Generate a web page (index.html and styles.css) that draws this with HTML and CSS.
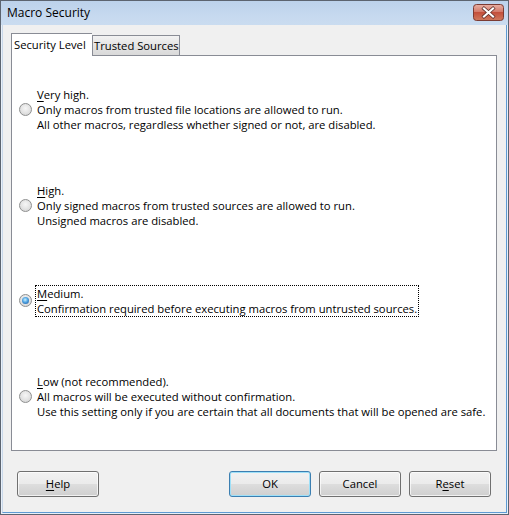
FILE: index.html
```html
<!DOCTYPE html>
<html>
<head>
<meta charset="utf-8">
<link rel="stylesheet" href="styles.css">
</head>
<body>
<div class="window">
  <div class="titlebar">
    <span class="title">Macro Security</span>
    <div class="close">
      <svg width="31" height="17" viewBox="0 0 31 17">
        <defs>
          <linearGradient id="cg" x1="0" y1="0" x2="0" y2="1">
            <stop offset="0" stop-color="#e9b1a5"/>
            <stop offset="0.45" stop-color="#d47b6b"/>
            <stop offset="0.5" stop-color="#c4503c"/>
            <stop offset="1" stop-color="#cf7a5e"/>
          </linearGradient>
        </defs>
        <rect x="0.5" y="0.5" width="30" height="16" rx="3" fill="url(#cg)" stroke="#7b3b33"/>
        <path d="M11 4.5 L20 12.5 M20 4.5 L11 12.5" stroke="#5a2a24" stroke-width="3.6" stroke-linecap="square"/>
        <path d="M11 4.5 L20 12.5 M20 4.5 L11 12.5" stroke="#ffffff" stroke-width="2.2" stroke-linecap="square"/>
      </svg>
    </div>
  </div>
  <div class="client">
    <div class="tabs">
      <div class="tab active">Security Level</div>
      <div class="tab">Trusted Sources</div>
    </div>
    <div class="panel">
      <div class="option">
        <span class="radio"></span>
        <span class="label"><u>V</u>ery high.<br>Only macros from trusted file locations are allowed to run.<br>All other macros, regardless whether signed or not, are disabled.</span>
      </div>
      <div class="option">
        <span class="radio"></span>
        <span class="label"><u>H</u>igh.<br>Only signed macros from trusted sources are allowed to run.<br>Unsigned macros are disabled.</span>
      </div>
      <div class="option">
        <span class="radio checked"></span>
        <span class="label focus"><u>M</u>edium.<br>Confirmation required before executing macros from untrusted sources.</span>
      </div>
      <div class="option">
        <span class="radio"></span>
        <span class="label"><u>L</u>ow (not recommended).<br>All macros will be executed without confirmation.<br>Use this setting only if you are certain that all documents that will be opened are safe.</span>
      </div>
    </div>
    <div class="buttons">
      <div class="btn"><u>H</u>elp</div>
      <div class="spacer"></div>
      <div class="btn default">OK</div>
      <div class="btn">Cancel</div>
      <div class="btn">R<u>e</u>set</div>
    </div>
  </div>
</div>
</body>
</html>
```

FILE: styles.css
```css
html, body {
  margin: 0;
  padding: 0;
  background: #ffffff;
}
body {
  font-family: "Open Sans", "Noto Sans", sans-serif;
  font-size: 11.25px;
  color: #000;
}
u {
  text-decoration: underline;
  text-underline-offset: 2px;
}
.window {
  width: 509px;
  height: 515px;
  box-sizing: border-box;
  border: 1px solid #5c6470;
  background: #e8f0f9;
  display: flex;
  flex-direction: column;
  padding: 0 1px 1px 1px;
}
.titlebar {
  height: 24px;
  flex: none;
  display: flex;
  align-items: center;
  justify-content: space-between;
  padding: 0 2px 0 6px;
  background: linear-gradient(#bcd2eb, #c6d9ef 60%, #cadcf0);
  margin: 0 -1px;
}
.title {
  font-size: 12px;
  color: #000;
  margin-top: -1px;
}
.close {
  width: 31px;
  height: 17px;
  margin-top: -2px;
  margin-right: 2px;
}
.close svg {
  display: block;
}
.client {
  flex: 1;
  background: #f0f0f0;
  border-right: 1px solid #5f9ad3;
  border-bottom: 1px solid #5f9ad3;
  border-left: 1px solid #c9d8ea;
  padding: 8px 9px 0 8px;
  display: flex;
  flex-direction: column;
}
.tabs {
  display: flex;
  align-items: flex-end;
  height: 22px;
  position: relative;
  z-index: 1;
}
.tab {
  box-sizing: border-box;
  height: 20px;
  line-height: 19px;
  padding: 0 1px;
  border: 1px solid #898c95;
  border-bottom: none;
  background: linear-gradient(#f2f2f2, #e4e4e4 50%, #d9d9d9);
  width: 88px;
  text-align: left;
  white-space: nowrap;
  overflow: hidden;
}
.tab.active {
  height: 23px;
  width: 81px;
  margin-bottom: -1px;
  background: #ffffff;
  line-height: 21px;
  border-right: none;
  padding: 0 2px;
}
.panel {
  box-sizing: border-box;
  height: 396px;
  border: 1px solid #898c95;
  background: #ffffff;
  padding: 6px 7px;
  display: grid;
  grid-template-rows: repeat(4, 1fr);
}
.option {
  display: flex;
  align-items: center;
}
.radio {
  width: 13px;
  height: 13px;
  box-sizing: border-box;
  border-radius: 50%;
  border: 1px solid #8e8f8f;
  background: radial-gradient(circle at 50% 40%, #f6f6f6 0%, #e6e6e6 45%, #cfcfcf 100%);
  margin-right: 3px;
  flex: none;
  position: relative;
}
.radio.checked::after {
  content: "";
  position: absolute;
  left: 2px;
  top: 2px;
  width: 7px;
  height: 7px;
  border-radius: 50%;
  background: radial-gradient(circle at 45% 40%, #c9f1ff 0%, #4fa3e2 45%, #1a4f93 100%);
}
.label {
  line-height: 15px;
  border: 1px dotted transparent;
  padding: 0 1px;
  white-space: nowrap;
}
.label.focus {
  border-color: #000;
}
.buttons {
  display: flex;
  gap: 8px;
  margin-top: 20px;
  padding: 0 6px 0 6px;
}
.spacer {
  flex: 1;
}
.btn {
  box-sizing: border-box;
  width: 82px;
  height: 26px;
  line-height: 23px;
  text-align: center;
  border: 1px solid #707070;
  border-radius: 3px;
  background: linear-gradient(#f2f2f2 0%, #ebebeb 48%, #dddddd 52%, #cfcfcf 100%);
  box-shadow: inset 0 0 0 1px rgba(255,255,255,0.7);
}
.btn.default {
  border-color: #3c7fb1;
  box-shadow: inset 0 0 0 1px #9ee0f8;
}
```
